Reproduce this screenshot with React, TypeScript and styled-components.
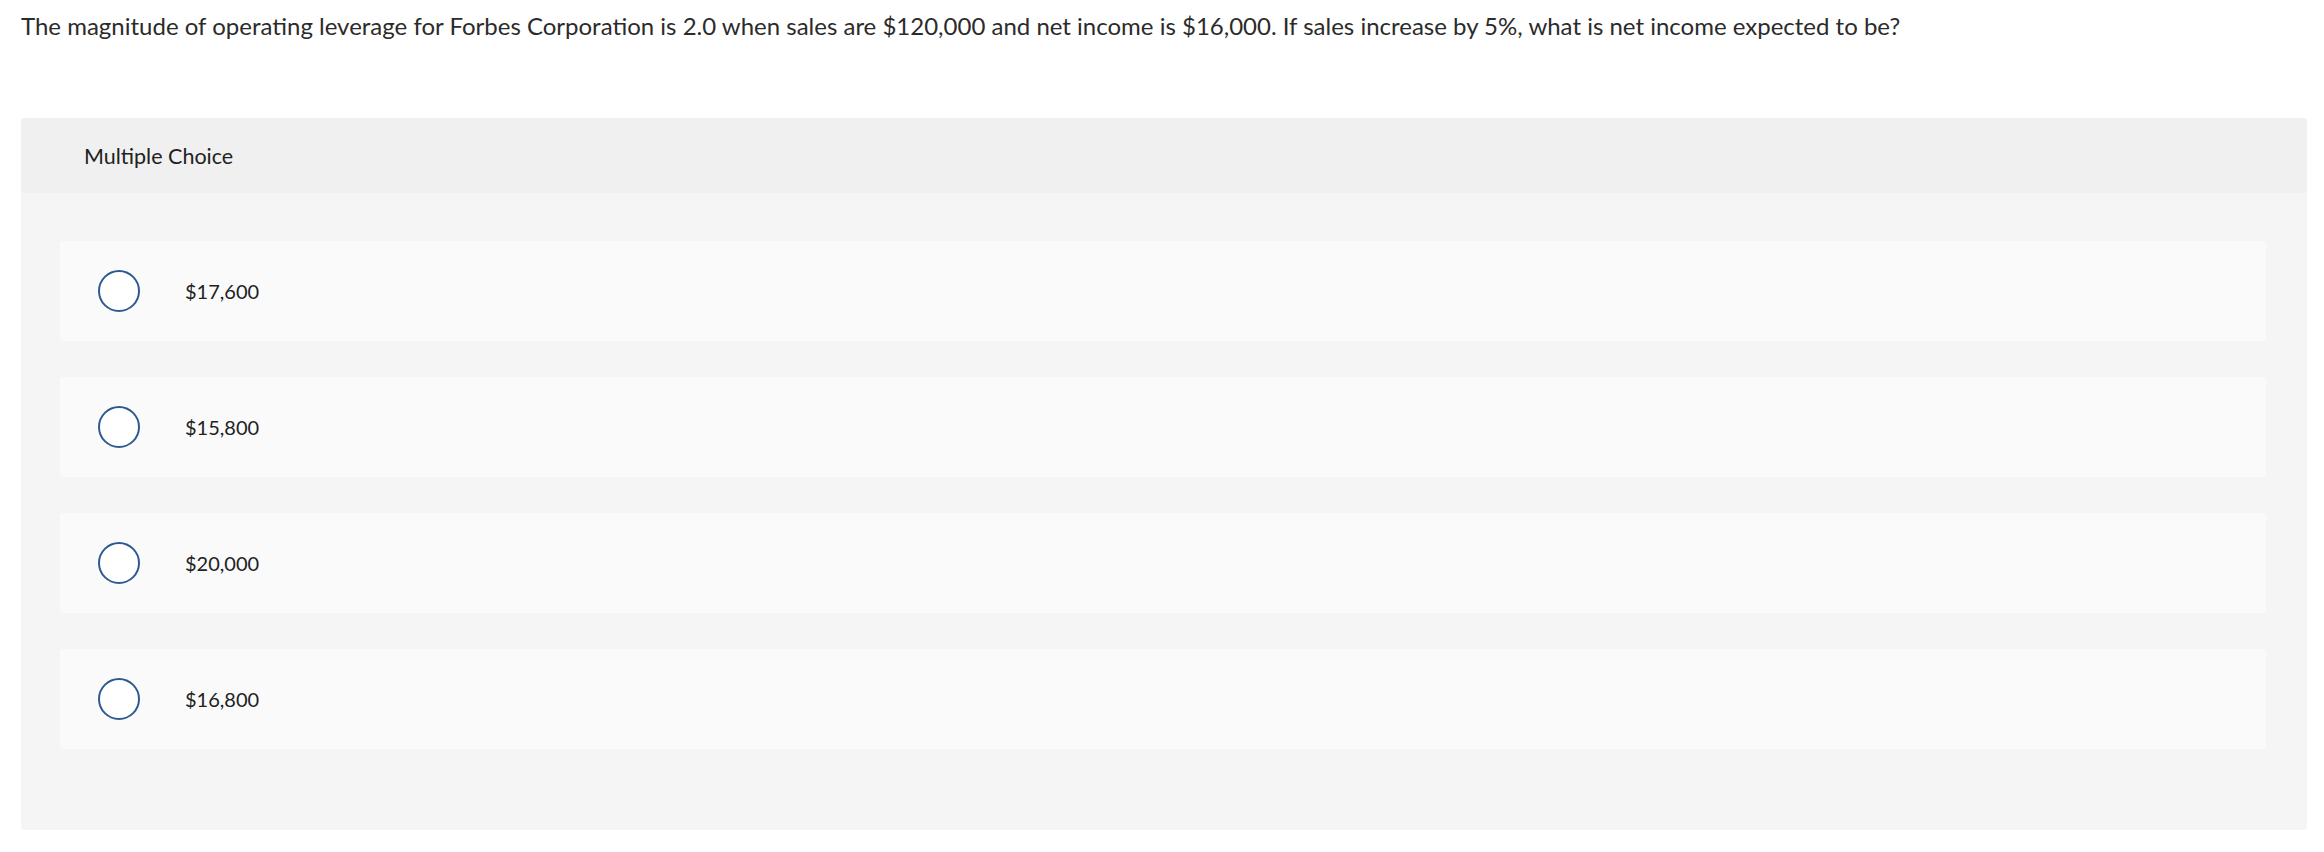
import React from "react";
import styled, { createGlobalStyle } from "styled-components";

const GlobalStyle = createGlobalStyle`
  body {
    margin: 0;
    background: #ffffff;
    font-family: Lato, "Liberation Sans", sans-serif;
    color: #2a2a2a;
  }
`;

const Page = styled.div`
  padding: 9px 17px 22px 21px;
`;

const Question = styled.p`
  margin: 0 0 75px;
  font-size: 24px;
  line-height: 34px;
  color: #2b2b2b;
`;

const Panel = styled.section`
  background: #f5f5f5;
  border-radius: 4px;
  overflow: hidden;
`;

const PanelHeader = styled.div`
  height: 75px;
  display: flex;
  align-items: center;
  padding-left: 63px;
  background: #f0f0f0;
  font-size: 21.5px;
  color: #222;
`;

const Choices = styled.div`
  display: flex;
  flex-direction: column;
  gap: 36px;
  padding: 48px 41px 81px 39px;
`;

const Choice = styled.label`
  height: 100px;
  display: flex;
  align-items: center;
  padding-left: 38px;
  background: #fafafa;
  border-radius: 4px;
  cursor: pointer;
`;

const Radio = styled.span`
  width: 42px;
  height: 42px;
  box-sizing: border-box;
  border: 2px solid #2d5b90;
  border-radius: 50%;
  background: #fff;
  flex-shrink: 0;
`;

const ChoiceText = styled.span`
  margin-left: 45px;
  font-size: 20px;
  color: #222;
`;

const options = ["$17,600", "$15,800", "$20,000", "$16,800"];

export default function App() {
  return (
    <Page>
      <GlobalStyle />
      <Question>
        The magnitude of operating leverage for Forbes Corporation is 2.0 when sales are $120,000 and net income is
        $16,000. If sales increase by 5%, what is net income expected to be?
      </Question>
      <Panel>
        <PanelHeader>Multiple Choice</PanelHeader>
        <Choices>
          {options.map((o) => (
            <Choice key={o}>
              <Radio />
              <ChoiceText>{o}</ChoiceText>
            </Choice>
          ))}
        </Choices>
      </Panel>
    </Page>
  );
}
